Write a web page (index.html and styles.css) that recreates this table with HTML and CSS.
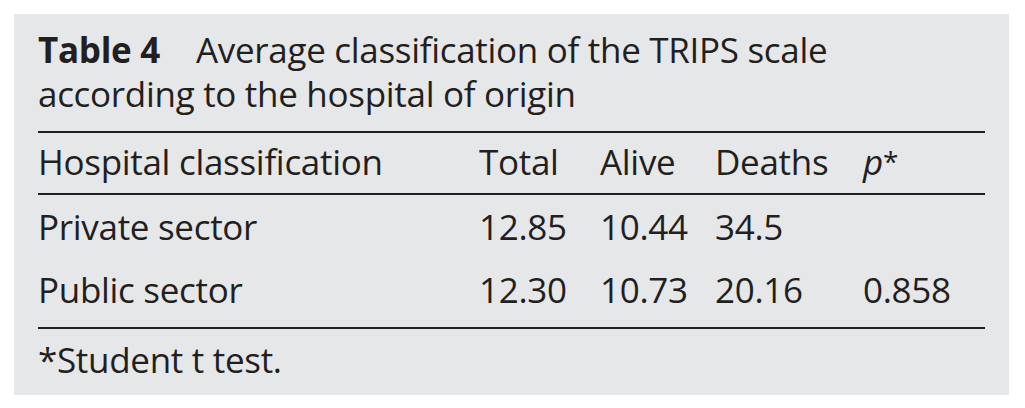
FILE: index.html
```html
<!DOCTYPE html>
<html lang="en">
<head>
<meta charset="utf-8">
<title>Table 4</title>
<link rel="stylesheet" href="styles.css">
</head>
<body>
<div class="panel">
  <div class="title">
    <div class="title-line"><span class="label">Table 4</span><span>Average classification of the TRIPS scale</span></div>
    <div class="title-line">according to the hospital of origin</div>
  </div>
  <table class="data">
    <colgroup>
      <col class="c-name">
      <col class="c-total">
      <col class="c-alive">
      <col class="c-deaths">
      <col class="c-p">
    </colgroup>
    <thead>
      <tr>
        <th>Hospital classification</th>
        <th>Total</th>
        <th>Alive</th>
        <th>Deaths</th>
        <th><i>p</i><span class="ast">*</span></th>
      </tr>
    </thead>
    <tbody>
      <tr>
        <td>Private sector</td>
        <td>12.85</td>
        <td>10.44</td>
        <td>34.5</td>
        <td></td>
      </tr>
      <tr class="last">
        <td>Public sector</td>
        <td>12.30</td>
        <td>10.73</td>
        <td>20.16</td>
        <td>0.858</td>
      </tr>
    </tbody>
  </table>
  <div class="note">*Student t test.</div>
</div>
</body>
</html>
```
FILE: styles.css
```css
html, body {
  margin: 0;
  padding: 0;
  background: #ffffff;
}

body {
  padding: 14px 0 0 14px;
  font-family: "Open Sans", "Noto Sans", sans-serif;
  color: #231f20;
}

.panel {
  width: 995px;
  height: 381px;
  box-sizing: border-box;
  background: #e6e7e8;
  padding: 14px 24px 0 24px;
  font-size: 35px;
  line-height: 44px;
  letter-spacing: -0.3px;
}

.title {
  display: flex;
  flex-direction: column;
  padding-bottom: 15px;
  border-bottom: 2px solid #231f20;
}

.title-line {
  display: flex;
  white-space: nowrap;
}

.label {
  font-weight: 700;
  margin-right: 36px;
}

.data {
  width: 100%;
  table-layout: fixed;
  border-collapse: separate;
  border-spacing: 0;
  font-size: 35px;
  line-height: 44px;
}

.c-name { width: 441px; }
.c-total { width: 121px; }
.c-alive { width: 115px; }
.c-deaths { width: 148px; }
.c-p { width: 122px; }

.data th {
  font-weight: 400;
  text-align: left;
  padding: 6px 0 9px;
  border-bottom: 2px solid #231f20;
  white-space: nowrap;
}

.ast {
  font-size: 28px;
  vertical-align: 3px;
}

.data td {
  text-align: left;
  padding: 10px 0 9px;
  white-space: nowrap;
}

.data tr.last td {
  padding-bottom: 15px;
  border-bottom: 2px solid #231f20;
}

.note {
  padding-top: 9px;
}
```
